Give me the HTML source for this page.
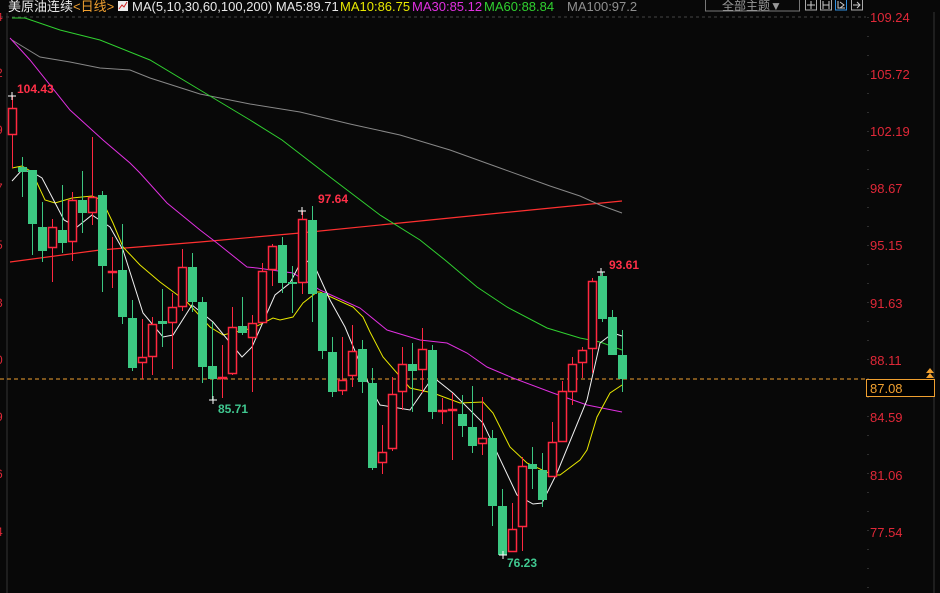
<!DOCTYPE html>
<html><head><meta charset="utf-8"><style>
html,body{margin:0;padding:0;background:#080808;width:940px;height:593px;overflow:hidden;font-family:"Liberation Sans","Noto Sans CJK SC",sans-serif}
svg{position:absolute;left:0;top:0}
</style></head><body>
<svg width="940" height="593" viewBox="0 0 940 593" xmlns="http://www.w3.org/2000/svg" font-family="Liberation Sans, Noto Sans CJK SC, sans-serif">
<rect width="940" height="593" fill="#080808"/>
<line x1="0" y1="17" x2="866" y2="17" stroke="#444" stroke-dasharray="3,3"/>
<line x1="7" y1="12" x2="7" y2="593" stroke="#333"/>
<line x1="934" y1="12" x2="934" y2="593" stroke="#333"/>
<line x1="868" y1="17" x2="868" y2="593" stroke="#555" stroke-dasharray="1,18"/>
<line x1="0" y1="379" x2="866" y2="379" stroke="#f0a030" stroke-dasharray="4,3"/>
<g fill="#e02838" font-size="12">
<text x="-4" y="21">4</text><text x="-4" y="77">2</text><text x="-4" y="134">9</text><text x="-4" y="192">7</text><text x="-4" y="249">5</text><text x="-4" y="307">3</text><text x="-4" y="364">0</text><text x="-4" y="421">9</text><text x="-4" y="478">6</text><text x="-4" y="536">4</text>
</g>
<g fill="#e02838" font-size="13">
<text x="870" y="22">109.24</text><text x="870" y="79">105.72</text><text x="870" y="136">102.19</text><text x="870" y="193">98.67</text><text x="870" y="250">95.15</text><text x="870" y="308">91.63</text><text x="870" y="365">88.11</text><text x="870" y="422">84.59</text><text x="870" y="480">81.06</text><text x="870" y="537">77.54</text>
</g>
<rect x="866.5" y="379.5" width="68" height="17" fill="#000" stroke="#f0a030"/>
<text x="870" y="393" fill="#f0a030" font-size="13">87.08</text>
<path d="M926 378 l4 -5 l4 5 z M926 373 l4 -5 l4 5z" fill="#f0a030"/>
<polyline fill="none" stroke="#ff3030" stroke-width="1.2" points="10,262 100,250 200,242 300,233 400,223 500,213 622,201"/>
<polyline fill="none" stroke="#888" stroke-width="1" points="12,40 40,57 70,62 100,68 130,70 150,78 200,94 250,104 300,112 350,124 400,135 450,150 500,168 550,186 580,196 600,205 622,213"/>
<polyline fill="none" stroke="#30d030" stroke-width="1" points="12,18 25,18 60,30 100,40 150,60 200,90 250,120 282,140 330,177 380,215 420,240 445,260 477,287 507,307 547,328 580,338 600,342 622,350"/>
<polyline fill="none" stroke="#e030e0" stroke-width="1" points="10,38 30,60 70,110 103,140 130,163 140,173 167,203 200,230 217,243 247,267 257,268 293,273 320,290 360,308 387,330 420,340 447,343 467,353 487,367 513,378 553,393 587,405 607,409 622,412"/>
<g id="c"></g>
<polyline fill="none" stroke="#e8e800" stroke-width="1" points="12,168 22,166 32,172 45,200 55,203 72,198 92,196 102,200 113,223 123,247 140,265 160,282 187,302 210,327 223,335 253,328 273,318 280,320 293,317 303,303 317,292 320,292 353,307 363,317 370,332 383,357 410,388 433,393 460,403 483,402 493,413 510,447 527,463 553,475 560,475 580,460 587,450 597,417 610,393 622,385"/>
<polyline fill="none" stroke="#f0f0f0" stroke-width="1" points="12,181 22,170 32,172 42,178 52,197 64,220 77,227 92,215 110,227 123,250 143,313 163,337 173,335 192,305 213,322 242,357 252,347 275,295 290,283 303,258 315,267 330,300 345,327 370,387 380,405 410,410 433,377 453,393 483,423 517,495 533,504 542,503 557,473 587,400 600,343 613,333 622,336"/>
<g id="k"></g>
<g font-size="12" font-weight="bold">
<text x="17" y="93" fill="#ff3048">104.43</text>
<text x="318" y="203" fill="#ff3048">97.64</text>
<text x="218" y="413" fill="#40c890">85.71</text>
<text x="609" y="269" fill="#ff3048">93.61</text>
<text x="507" y="567" fill="#40c890">76.23</text>
</g>
<g stroke="#fff"><path d="M8 96h8M12 92v8M298 211h8M302 207v8M209 400h8M213 396v8M597 272h8M601 268v8M499 555h8M503 551v8"/></g>
<rect x="0" y="0" width="700" height="13" fill="#080808"/>
<g font-size="13">
<text x="8" y="11" fill="#e8e8e8">美原油连续<tspan fill="#f0a030">&lt;日线&gt;</tspan></text>
<rect x="118" y="1" width="10" height="10" fill="#eee"/><path d="M119 9l3-4 2 2 3-5" stroke="#d02020" fill="none"/>
<text x="132" y="11" fill="#e8e8e8">MA(5,10,30,60,100,200)  MA5:89.71</text>
<text x="340" y="11" fill="#e8e800">MA10:86.75</text>
<text x="412" y="11" fill="#e030e0">MA30:85.12</text>
<text x="484" y="11" fill="#30d030">MA60:88.84</text>
<text x="567" y="11" fill="#909090">MA100:97.2</text>
</g>
<rect x="705.5" y="-1" width="94" height="12" fill="none" stroke="#777"/>
<text x="722" y="10" fill="#999" font-size="12">全部主题▼</text>
<rect x="805.5" y="-1" width="11" height="11" fill="none" stroke="#aaa"/>
<rect x="820.5" y="-1" width="11" height="11" fill="none" stroke="#aaa"/>
<rect x="835.5" y="-1" width="11" height="11" fill="none" stroke="#3090e0"/>
<rect x="851.5" y="-1" width="11" height="11" fill="none" stroke="#aaa"/>
<path d="M811 1v8M807 5h8M823 1v8M829 1v8M823 5h6M838 1v7h7M840 2l4 3-4 3M853 5h7M857 2l3 3-3 3" stroke="#ccc" fill="none"/>
</svg>
<script>
var d=[[135,108,96,168],[167,172,157,197],[170,224,170,255],[227,251,202,262],[248,227,219,282],[230,243,185,253],[242,200,192,261],[200,213,171,233],[213,197,137,225],[195,266,191,292],[271,271,237,288],[270,317,224,324],[318,368,300,371],[363,357,319,379],[357,324,317,375],[321,324,289,347],[323,307,293,369],[307,267,249,311],[267,302,253,312],[302,367,297,383],[366,379,322,400],[379,377,345,398],[374,327,307,375],[326,333,297,335],[338,323,315,392],[323,271,263,323],[270,246,244,286],[245,283,237,293],[282,283,266,313],[283,219,211,294],[220,294,206,322],[293,351,293,359],[352,392,337,397],[391,380,337,395],[376,351,325,387],[349,382,340,393],[383,468,368,470],[463,452,425,474],[449,394,377,451],[392,364,347,410],[364,371,343,412],[370,349,328,393],[350,412,345,419],[410,410,398,424],[410,409,393,460],[414,426,395,437],[427,446,386,453],[444,438,397,455],[438,506,430,526],[506,555,489,555],[552,529,503,552],[527,466,457,551],[464,469,447,489],[470,500,453,507],[477,442,422,477],[442,391,381,442],[392,364,357,405],[363,350,347,378],[349,281,278,373],[276,319,272,322],[317,355,310,355],[355,379,330,392]];
var ns="http://www.w3.org/2000/svg",g=document.getElementById("k"),s="";
d.forEach(function(c,i){var x=12+10*i,o=c[0],cl=c[1],up=cl<o||(cl==o&&i!=1);var col=up?"#ff2840":"#3cc882";var t=Math.min(o,cl),b=Math.max(o,cl);
s+='<line x1="'+(x+0.5)+'" x2="'+(x+0.5)+'" y1="'+c[2]+'" y2="'+c[3]+'" stroke="'+col+'"/>';
if(up){s+='<rect x="'+(x-3.5)+'" y="'+(t+0.5)+'" width="8" height="'+Math.max(b-t-1,1)+'" fill="#080808" stroke="'+col+'" stroke-width="1.5"/>';}
else{s+='<rect x="'+(x-4)+'" y="'+t+'" width="9" height="'+Math.max(b-t,2)+'" fill="'+col+'"/>';}});
g.innerHTML=s;
</script>
</body></html>
